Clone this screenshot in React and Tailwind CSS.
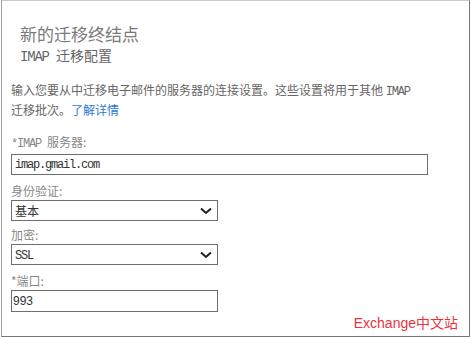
import { useState } from 'react'

const CJK = "font-['Noto_Sans_CJK_SC',sans-serif]"

function Mono({ children }) {
  return <span className="font-['Liberation_Mono','Noto_Sans_CJK_SC',monospace] tracking-[-1.2px]">{children}</span>
}

function Chevron() {
  return (
    <svg width="12" height="8" viewBox="0 0 12 8" className="shrink-0">
      <path d="M1 1.5 L6 6 L11 1.5" fill="none" stroke="#222" strokeWidth="2" />
    </svg>
  )
}

function SelectBox({ value, mono }) {
  return (
    <div className="mt-px flex h-[21px] w-[207px] items-center justify-between border border-[#6e6e6e] bg-white pl-[3px] pr-[5px] text-[12px] text-[#333]">
      <span>{mono ? <Mono>{value}</Mono> : value}</span>
      <Chevron />
    </div>
  )
}

export default function App() {
  const [server] = useState('imap.gmail.com')

  return (
    <div className={`relative h-[337px] w-[471px] bg-white ${CJK}`}>
      <div className="ml-px h-[337px] w-[469px] border border-t-[#c9c9c9] border-l-[#a0a0a0] border-r-[#777] border-b-[#777] px-[9px]">
        <div className="ml-[9px] mt-[23px] text-[17px] leading-[20px] text-[#7a7a7a]">新的迁移终结点</div>
        <div className="ml-[9px] mt-[2px] text-[14px] leading-[18px] text-[#666]">
          <Mono>IMAP </Mono>迁移配置
        </div>

        <p className="mt-[15px] text-[12px] leading-[18px] text-[#666]">
          输入您要从中迁移电子邮件的服务器的连接设置。这些设置将用于其他 <Mono>IMAP</Mono>
          <br />
          迁移批次。<span className="text-[#2a7ad6]">了解详情</span>
        </p>

        <div className="mt-[15px] text-[12px] leading-[16px] text-[#888]">
          <Mono>*IMAP </Mono>服务器:
        </div>
        <div className="mt-[2px] flex h-[21px] w-[417px] items-center border border-[#6e6e6e] pl-[3px] text-[12px] text-[#333]">
          <Mono>{server}</Mono>
        </div>

        <div className="mt-[8px] text-[12px] leading-[16px] text-[#888]">身份验证:</div>
        <SelectBox value="基本" />

        <div className="mt-[6px] text-[12px] leading-[16px] text-[#888]">加密:</div>
        <SelectBox value="SSL" mono />

        <div className="mt-[8px] text-[12px] leading-[16px] text-[#888]">*端口:</div>
        <div className="mt-px flex h-[22px] w-[207px] items-center border border-[#6e6e6e] pl-px font-['Liberation_Sans',sans-serif] text-[12px] text-[#333]">
          993
        </div>
      </div>

      <div className="absolute bottom-[5px] right-[13px] text-[14px] leading-[18px] text-[#e8323c]">
        <span className="font-['Liberation_Sans',sans-serif]">Exchange</span>中文站
      </div>
    </div>
  )
}
